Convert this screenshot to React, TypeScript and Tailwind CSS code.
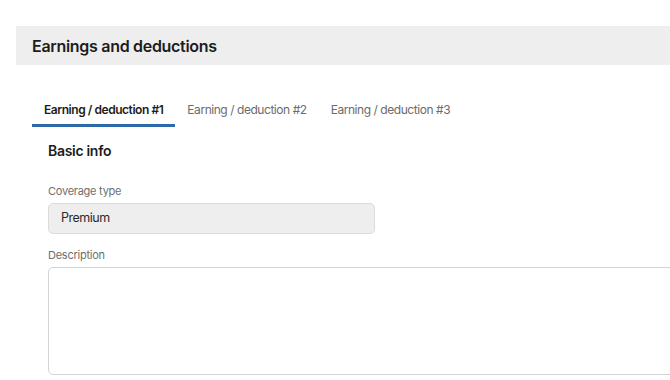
import React from "react";

export default function App() {
  const tabs = ["Earning / deduction #1", "Earning / deduction #2", "Earning / deduction #3"];
  return (
    <div
      className="w-[670px] h-[380px] overflow-hidden bg-white pt-[26px] pl-4"
      style={{ fontFamily: "Inter, 'Noto Sans', sans-serif" }}
    >
      <div className="w-[700px] h-[39px] bg-[#eeeeee] flex items-center px-4">
        <h1 className="text-[16px] font-semibold text-[#1c1c1c] tracking-[-0.3px]">Earnings and deductions</h1>
      </div>
      <div className="pl-4 w-[700px]">
        <div className="flex mt-[28px]">
          {tabs.map((t, i) => (
            <div
              key={t}
              className={
                i === 0
                  ? "px-3 pt-[9px] pb-[6px] border-b-[3px] border-[#2e6aa8] text-[12px] leading-[16px] tracking-[-0.45px] font-semibold text-[#1c1c1c]"
                  : "px-3 pt-[9px] pb-[6px] border-b-[3px] border-transparent text-[12px] leading-[16px] tracking-[-0.45px] text-[#6b6b6b]"
              }
            >
              {t}
            </div>
          ))}
        </div>
        <div className="pl-4">
          <h2 className="mt-[14px] text-[14px] leading-[20px] font-semibold tracking-[-0.3px] text-[#1c1c1c]">Basic info</h2>
          <div className="mt-[22px] text-[11px] leading-[16px] tracking-[-0.25px] text-[#6e6e6e]">Coverage type</div>
          <div className="mt-[4px] w-[327px] h-[31px] bg-[#eeeeee] border border-[#dcdcdc] rounded-[5px] flex items-center px-3 text-[12.5px] tracking-[-0.5px] text-[#2a2a2a]">
            Premium
          </div>
          <div className="mt-[13px] text-[11px] leading-[16px] tracking-[-0.25px] text-[#6e6e6e]">Description</div>
          <div className="mt-[4px] w-[700px] h-[108px] bg-white border border-[#d4d4d4] rounded-[5px]" />
        </div>
      </div>
    </div>
  );
}
